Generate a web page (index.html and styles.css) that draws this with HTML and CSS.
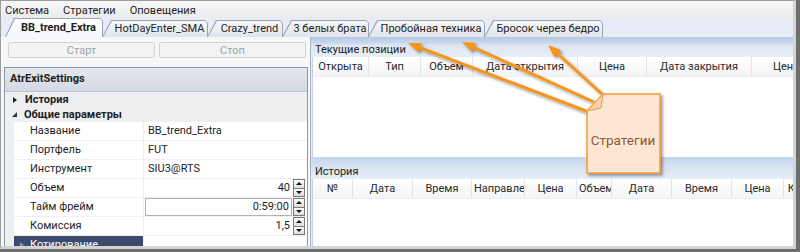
FILE: index.html
```html
<!DOCTYPE html>
<html lang="ru">
<head>
    <meta charset="UTF-8">
    <title>Стратегии</title>
    <link rel="stylesheet" href="styles.css">
</head>
<body>

<div class="window">

    <!-- Menu -->
    <div class="menubar">
        <span>Система</span>
        <span>Стратегии</span>
        <span>Оповещения</span>
    </div>

    <!-- Strategy tabs -->
    <div class="tabstrip">
        <div class="tab active"><span>BB_trend_Extra</span></div>
        <div class="tab"><span>HotDayEnter_SMA</span></div>
        <div class="tab"><span>Crazy_trend</span></div>
        <div class="tab"><span>3 белых брата</span></div>
        <div class="tab"><span>Пробойная техника</span></div>
        <div class="tab"><span>Бросок через бедро</span></div>
    </div>

    <div class="content">

        <!-- Left: controls and settings -->
        <div class="left">
            <div class="buttons">
                <button disabled>Старт</button>
                <button disabled>Стоп</button>
            </div>

            <div class="propgrid">
                <div class="pg-title">AtrExitSettings</div>
                <div class="pg-cat"><i class="caret"></i>История</div>
                <div class="pg-cat"><i class="caret open"></i>Общие параметры</div>
                <div class="pg-rows">
                    <div class="pg-row">
                        <div class="pg-name">Название</div>
                        <div class="pg-val">BB_trend_Extra</div>
                    </div>
                    <div class="pg-row">
                        <div class="pg-name">Портфель</div>
                        <div class="pg-val">FUT</div>
                    </div>
                    <div class="pg-row">
                        <div class="pg-name">Инструмент</div>
                        <div class="pg-val">SIU3@RTS</div>
                    </div>
                    <div class="pg-row">
                        <div class="pg-name">Объем</div>
                        <div class="pg-val num-val"><span class="num">40</span><span class="spin"><i class="up"></i><i class="down"></i></span></div>
                    </div>
                    <div class="pg-row">
                        <div class="pg-name">Тайм фрейм</div>
                        <div class="pg-val num-val"><span class="num edit">0:59:00</span><span class="spin"><i class="up"></i><i class="down"></i></span></div>
                    </div>
                    <div class="pg-row">
                        <div class="pg-name">Комиссия</div>
                        <div class="pg-val num-val"><span class="num">1,5</span><span class="spin"><i class="up"></i><i class="down"></i></span></div>
                    </div>
                    <div class="pg-row">
                        <div class="pg-name sub selected"><i class="caret small"></i>Котирование</div>
                        <div class="pg-val"></div>
                    </div>
                </div>
            </div>
        </div>

        <!-- Right: positions and history -->
        <div class="right">
            <div class="ptitle top">Текущие позиции</div>
            <div class="grid positions">
                <div class="grid-head">
                    <div>Открыта</div>
                    <div>Тип</div>
                    <div>Объем</div>
                    <div>Дата открытия</div>
                    <div>Цена</div>
                    <div>Дата закрытия</div>
                    <div>Цена</div>
                </div>
            </div>

            <div class="ptitle">История</div>
            <div class="grid history">
                <div class="grid-head">
                    <div>№</div>
                    <div>Дата</div>
                    <div>Время</div>
                    <div>Направление</div>
                    <div>Цена</div>
                    <div>Объем</div>
                    <div>Дата</div>
                    <div>Время</div>
                    <div>Цена</div>
                    <div>Комиссия</div>
                </div>
            </div>
        </div>
    </div>

    <!-- Callout -->
    <svg class="callout" width="800" height="252" viewBox="0 0 800 252">
        <defs>
            <marker id="head" markerWidth="13" markerHeight="10" refX="7" refY="5" orient="auto" markerUnits="userSpaceOnUse">
                <path d="M0,0 L13,5 L0,10 z" fill="#f7941e"/>
            </marker>
            <filter id="shadow" x="-20%" y="-20%" width="140%" height="140%">
                <feDropShadow dx="2" dy="2" stdDeviation="1.5" flood-color="#000" flood-opacity="0.4"/>
            </filter>
        </defs>
        <g filter="url(#shadow)">
            <line x1="586" y1="111" x2="413.6" y2="45.2" stroke="#f7941e" stroke-width="3" marker-end="url(#head)"/>
            <line x1="594" y1="102" x2="467.5" y2="44.5" stroke="#f7941e" stroke-width="3" marker-end="url(#head)"/>
            <line x1="602" y1="94" x2="552.5" y2="49" stroke="#f7941e" stroke-width="3" marker-end="url(#head)"/>
        </g>
        <g filter="url(#shadow)">
            <polygon points="603,94 660,94 660,173 587,173 587,111" fill="#fde7d2" stroke="#f39a3a" stroke-width="1.5"/>
        </g>
        <polygon points="603,94 587,111 601,108" fill="#f9d3ad" stroke="#f39a3a" stroke-width="1"/>
        <text x="623" y="145" text-anchor="middle" class="callout-text">Стратегии</text>
    </svg>

</div>

</body>
</html>
```

FILE: styles.css
```css
body {
    margin: 0;
    width: 800px;
    height: 252px;
    overflow: hidden;
    background: #6d6d6d;
    font-family: Roboto, Arial, sans-serif;
    font-size: 11px;
    color: #1e1e1e;
}

.window {
    position: relative;
    width: 792px;
    height: 245px;
    border-top: 1px solid #9c9c9c;
    border-left: 1px solid #9c9c9c;
    border-right: 3px solid #d3d3d3;
    border-bottom: 3px solid #d3d3d3;
    background: #f4f5f7;
    overflow: hidden;
    display: flex;
    flex-direction: column;
}

/* menu */
.menubar {
    height: 17px;
    display: flex;
    align-items: center;
    gap: 14px;
    padding: 1px 0 0 4px;
    box-sizing: border-box;
    background: linear-gradient(#f7f7f7, #ebebeb);
}

/* tabs */
.tabstrip {
    height: 19px;
    display: flex;
    align-items: flex-end;
    padding-left: 4px;
    background: #e7ecf7;
}
.tab {
    height: 17px;
    box-sizing: border-box;
    padding: 1px 1px 0 1px;
    margin-right: -1px;
    background: #9aa4b3;
    clip-path: polygon(0 100%, 9px 0, calc(100% - 3px) 0, 100% 3px, 100% 100%);
}
.tab span {
    display: block;
    height: 100%;
    padding-left: 9px;
    text-align: center;
    line-height: 16px;
    white-space: nowrap;
    background: linear-gradient(#f6f7f9, #e1e5eb);
    clip-path: polygon(0 100%, 9px 0, calc(100% - 2px) 0, 100% 2px, 100% 100%);
}
.tab.active {
    height: 19px;
}
.tab.active span {
    font-weight: bold;
    line-height: 18px;
    background: linear-gradient(#ffffff, #f4f6fa);
}
.tab:nth-child(1) { width: 98px; }
.tab:nth-child(2) { width: 106px; }
.tab:nth-child(3) { width: 76px; }
.tab:nth-child(4) { width: 87px; }
.tab:nth-child(5) { width: 117px; }
.tab:nth-child(6) { width: 119px; }

/* content */
.content {
    flex: 1;
    display: flex;
    min-height: 0;
}

.left {
    flex: none;
    width: 309px;
    display: flex;
    flex-direction: column;
    background: #f6f7f8;
}
.buttons {
    display: flex;
    gap: 4px;
    padding: 5px 4px 0 7px;
}
.buttons button {
    flex: 1;
    height: 16px;
    padding: 0;
    font-family: inherit;
    font-size: 11px;
    color: #a3a3a3;
    background: #f3f3f3;
    border: 1px solid #d2d2d2;
    border-radius: 2px;
}

.propgrid {
    flex: 1;
    margin: 9px 2px 0 3px;
    border: 1px solid #8e97a5;
    border-bottom: none;
    background: #eeeff1;
    overflow: hidden;
}
.pg-title {
    height: 23px;
    line-height: 22px;
    padding-left: 5px;
    font-weight: bold;
    background: linear-gradient(#e4e8ee, #d3d9e2);
    border-bottom: 1px solid #bcc3cd;
}
.pg-cat {
    height: 15px;
    display: flex;
    align-items: center;
    font-weight: bold;
    padding-left: 7px;
}
.caret {
    width: 0;
    height: 0;
    margin-right: 8px;
    margin-left: 1px;
    border-left: 4px solid #222;
    border-top: 3px solid transparent;
    border-bottom: 3px solid transparent;
}
.caret.open {
    border-left: 5px solid transparent;
    border-top: none;
    border-bottom: 5px solid #333;
    margin-left: 0;
    margin-right: 7px;
}
.caret.small {
    border-left-color: #7f93b8;
    margin-left: 6px;
    margin-right: 6px;
}

.pg-rows {
    display: flex;
    flex-direction: column;
    gap: 1px;
    padding-left: 9px;
}
.pg-row {
    display: flex;
    gap: 1px;
    height: 18px;
}
.pg-name {
    flex: none;
    width: 129px;
    padding-left: 16px;
    box-sizing: border-box;
    background: #fff;
    line-height: 18px;
    white-space: nowrap;
}
.pg-name.sub {
    display: flex;
    align-items: center;
    padding-left: 0;
}
.pg-name.selected {
    background: #3d4b6c;
    color: #fff;
}
.pg-val {
    flex: 1;
    padding-left: 4px;
    background: #fff;
    line-height: 18px;
    white-space: nowrap;
}
.pg-val.num-val {
    display: flex;
    padding-left: 1px;
}
.num {
    flex: 1;
    text-align: right;
    padding-right: 3px;
}
.num.edit {
    border: 1px solid #aab2be;
    line-height: 16px;
    margin-right: 1px;
    padding-right: 2px;
}
.spin {
    width: 12px;
    margin: 0 2px 0 0;
    display: flex;
    flex-direction: column;
}
.spin i {
    flex: 1;
    display: flex;
    align-items: center;
    justify-content: center;
    border: 1px solid #7a7a7a;
    background: linear-gradient(#fdfdfd, #dcdcdc);
}
.spin i + i {
    border-top: none;
}
.spin .up::after {
    content: "";
    border-bottom: 3px solid #111;
    border-left: 3px solid transparent;
    border-right: 3px solid transparent;
}
.spin .down::after {
    content: "";
    border-top: 3px solid #111;
    border-left: 3px solid transparent;
    border-right: 3px solid transparent;
}

/* right side */
.right {
    flex: 1;
    min-width: 0;
    display: flex;
    flex-direction: column;
    background: #e6ecf5;
    border-left: 1px solid #a9b3c1;
}
.ptitle {
    height: 22px;
    padding-left: 4px;
    display: flex;
    align-items: flex-end;
    line-height: 13px;
    padding-bottom: 1px;
    box-sizing: border-box;
    background: linear-gradient(#c3d4ec, #d8e3f2 10px, #e6edf7);
}
.ptitle.top {
    height: 20px;
    background: linear-gradient(#b6c9e4, #c9d8ec 6px, #dce6f3 8px, #e8eef8);
}
.grid {
    margin-left: 1px;
    border-left: 1px solid #c7d0dc;
    background: #fff;
    overflow: hidden;
}
.grid.positions {
    flex: none;
    height: 100px;
}
.grid.history {
    flex: 1;
}
.grid-head {
    display: grid;
    height: 19px;
    background: linear-gradient(#ffffff, #f3f4f6);
    border-bottom: 1px solid #eceef1;
}
.positions .grid-head {
    grid-template-columns: 56px 52px 52px 105px 69px 105px 69px;
}
.history .grid-head {
    grid-template-columns: 40px 60px 59px 53px 52px 35px 60px 60px 52px 60px;
}
.grid-head div {
    text-align: center;
    line-height: 19px;
    white-space: nowrap;
    overflow: hidden;
    padding: 0 2px;
    border-right: 1px solid #e2e4e8;
    color: #2a2a2a;
}

/* callout */
.callout {
    position: absolute;
    left: -1px;
    top: -1px;
    pointer-events: none;
}
.callout-text {
    font-family: Roboto, Arial, sans-serif;
    font-size: 13.5px;
    fill: #8e5a35;
}
```
